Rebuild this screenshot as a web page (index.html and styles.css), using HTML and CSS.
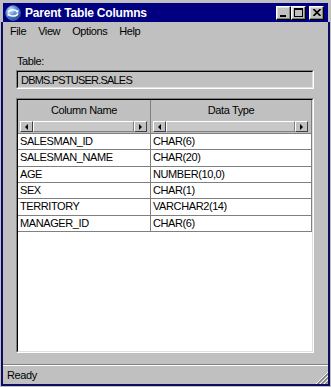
FILE: index.html
```html
<!DOCTYPE html>
<html>
<head>
<meta charset="utf-8">
<title>Parent Table Columns</title>
<link rel="stylesheet" href="styles.css">
</head>
<body>
<div class="window">
  <div class="titlebar">
    <svg class="app-icon" viewBox="0 0 16 16" width="16" height="16">
      <defs>
        <radialGradient id="ball" cx="0.35" cy="0.3" r="0.8">
          <stop offset="0" stop-color="#d8e8ff"/>
          <stop offset="0.45" stop-color="#5b8fdc"/>
          <stop offset="1" stop-color="#173a86"/>
        </radialGradient>
      </defs>
      <circle cx="8" cy="8" r="7.4" fill="url(#ball)" stroke="#6d7fa8" stroke-width="0.6"/>
      <path d="M3.2 7.6 C3.6 4.6 10.2 4 12.4 6.4" stroke="#fff" stroke-width="1.5" fill="none"/>
      <polygon points="13.4,4.6 13.4,7.8 10.4,7.2" fill="#fff"/>
      <path d="M12.8 8.4 C12.4 11.4 5.8 12 3.6 9.6" stroke="#fff" stroke-width="1.5" fill="none"/>
      <polygon points="2.6,11.4 2.6,8.2 5.6,8.8" fill="#fff"/>
    </svg>
    <span class="title">Parent Table Columns</span>
    <div class="caption-buttons">
      <div class="cbtn"><span class="glyph-min"></span></div>
      <div class="cbtn"><span class="glyph-max"></span></div>
      <div class="cbtn cbtn-close">
        <svg class="glyph-close" viewBox="0 0 8 7" width="8" height="7">
          <path d="M0.5 0 L7.5 7 M7.5 0 L0.5 7" stroke="#000" stroke-width="1.6"/>
        </svg>
      </div>
    </div>
  </div>
  <div class="frame">
    <div class="menubar">
      <span class="menu-item">File</span>
      <span class="menu-item">View</span>
      <span class="menu-item">Options</span>
      <span class="menu-item">Help</span>
    </div>
    <div class="content">
      <div class="field-label">Table:</div>
      <div class="textbox"><div class="textbox-inner">DBMS.PSTUSER.SALES</div></div>
      <div class="grid">
        <div class="grid-inner">
          <div class="grid-header">
            <div class="hcell c1">
              <div class="htitle">Column Name</div>
              <div class="hscroll">
                <div class="sbtn"><span class="arr-l"></span></div>
                <div class="sthumb"></div>
                <div class="sbtn"><span class="arr-r"></span></div>
              </div>
            </div>
            <div class="hcell c2">
              <div class="htitle">Data Type</div>
              <div class="hscroll">
                <div class="sbtn"><span class="arr-l"></span></div>
                <div class="sthumb"></div>
                <div class="sbtn"><span class="arr-r"></span></div>
              </div>
            </div>
          </div>
          <div class="grid-body">
            <div class="row"><div class="cell c1">SALESMAN_ID</div><div class="cell c2">CHAR(6)</div></div>
            <div class="row"><div class="cell c1">SALESMAN_NAME</div><div class="cell c2">CHAR(20)</div></div>
            <div class="row"><div class="cell c1">AGE</div><div class="cell c2">NUMBER(10,0)</div></div>
            <div class="row"><div class="cell c1">SEX</div><div class="cell c2">CHAR(1)</div></div>
            <div class="row"><div class="cell c1">TERRITORY</div><div class="cell c2">VARCHAR2(14)</div></div>
            <div class="row"><div class="cell c1">MANAGER_ID</div><div class="cell c2">CHAR(6)</div></div>
          </div>
        </div>
      </div>
    </div>
    <div class="statusbar">
      <span class="status-text">Ready</span>
      <svg class="grip" viewBox="0 0 12 12" width="12" height="12">
        <path d="M12 0 L0 12 M12 4 L4 12 M12 8 L8 12" stroke="#fff" stroke-width="1"/>
        <path d="M12 1.5 L1.5 12 M12 5.5 L5.5 12 M12 9.5 L9.5 12" stroke="#808080" stroke-width="1.5"/>
      </svg>
    </div>
  </div>
</div>
</body>
</html>
```

FILE: styles.css
```css
* {
  box-sizing: border-box;
}

html, body {
  margin: 0;
  padding: 0;
}

body {
  width: 331px;
  height: 387px;
  overflow: hidden;
  background: #c0c0c0;
  color: #000;
  font-family: "Liberation Sans", Arial, sans-serif;
  font-size: 11px;
  letter-spacing: -0.4px;
}

.window {
  width: 331px;
  height: 387px;
  padding: 3px 1px 1px 1px;
  display: flex;
  flex-direction: column;
  background: #c0c0c0;
}

/* Title bar */
.titlebar {
  height: 19px;
  margin: 0 2px;
  padding: 0 4px 0 2px;
  background: #000080;
  display: flex;
  align-items: center;
  flex: none;
}

.app-icon {
  flex: none;
  display: block;
}

.title {
  flex: 1;
  margin-left: 4px;
  color: #fff;
  font-weight: bold;
  font-size: 12px;
  letter-spacing: -0.2px;
  white-space: nowrap;
}

.caption-buttons {
  display: flex;
  align-items: center;
}

.cbtn {
  position: relative;
  width: 15px;
  height: 14px;
  background: #c0c0c0;
  border: 1px solid;
  border-color: #fff #000 #000 #fff;
  box-shadow: inset -1px -1px 0 #808080, inset 1px 1px 0 #dfdfdf;
}

.cbtn-close {
  margin-left: 3px;
}

.glyph-min {
  position: absolute;
  left: 3px;
  bottom: 2px;
  width: 6px;
  height: 2px;
  background: #000;
}

.glyph-max {
  position: absolute;
  left: 2px;
  top: 1px;
  width: 9px;
  height: 9px;
  border: 1px solid #000;
  border-top-width: 2px;
}

.glyph-close {
  position: absolute;
  left: 2.5px;
  top: 2.5px;
  display: block;
}

/* Frame */
.frame {
  flex: 1;
  min-height: 0;
  border: 2px solid #0c0c62;
  border-top: 0;
  display: flex;
  flex-direction: column;
}

.menubar {
  height: 18px;
  flex: none;
  display: flex;
  align-items: center;
  gap: 12px;
  padding-left: 7px;
}

.content {
  flex: 1;
  min-height: 0;
  padding: 0 14px 0 13px;
  display: flex;
  flex-direction: column;
}

.field-label {
  margin-top: 15px;
  line-height: 13px;
  padding-left: 1px;
}

.textbox {
  margin-top: 2px;
  height: 19px;
  flex: none;
  border: 1px solid;
  border-color: #808080 #fff #fff #808080;
}

.textbox-inner {
  height: 100%;
  border: 1px solid;
  border-color: #000 #dfdfdf #dfdfdf #000;
  padding-left: 3px;
  line-height: 16px;
  letter-spacing: -0.8px;
  white-space: nowrap;
}

/* Grid */
.grid {
  flex: 1;
  min-height: 0;
  margin: 9px 0 11px 0;
  border: 1px solid;
  border-color: #808080 #fff #fff #808080;
  display: flex;
}

.grid-inner {
  flex: 1;
  border: 1px solid;
  border-color: #000 #dfdfdf #dfdfdf #000;
  background: #fff;
  display: flex;
  flex-direction: column;
}

.grid-header {
  display: flex;
  background: #c0c0c0;
  border-bottom: 1px solid #808080;
  flex: none;
}

.c1 {
  width: 133px;
  flex: none;
}

.c2 {
  width: 161px;
  flex: none;
}

.hcell {
  display: flex;
  flex-direction: column;
  border-right: 1px solid #808080;
}

.htitle {
  height: 21px;
  line-height: 21px;
  text-align: center;
  white-space: nowrap;
}

.hscroll {
  height: 11px;
  margin: 0 3px 1px 2px;
  display: flex;
}

.sbtn {
  width: 13px;
  flex: none;
  background: #c0c0c0;
  border: 1px solid;
  border-color: #fff #404040 #404040 #fff;
  display: flex;
  align-items: center;
  justify-content: center;
}

.sthumb {
  flex: 1;
  background: #c8c8c8;
  border: 1px solid;
  border-color: #fff #808080 #808080 #fff;
}

.arr-l,
.arr-r {
  width: 0;
  height: 0;
  border-top: 3px solid transparent;
  border-bottom: 3px solid transparent;
}

.arr-l {
  border-right: 3px solid #000;
}

.arr-r {
  border-left: 3px solid #000;
}

.grid-body {
  flex: 1;
}

.row {
  display: flex;
  height: 16.33px;
  border-bottom: 1px solid #808080;
}

.cell {
  padding-left: 2px;
  line-height: 15px;
  white-space: nowrap;
  overflow: hidden;
  border-right: 1px solid #808080;
}

/* Status bar */
.statusbar {
  position: relative;
  height: 20px;
  flex: none;
  border-top: 1px solid #808080;
  box-shadow: inset 0 1px 0 #fff;
  display: flex;
  align-items: center;
  padding-left: 4px;
}

.grip {
  position: absolute;
  right: 0;
  bottom: 0;
  display: block;
}
```
